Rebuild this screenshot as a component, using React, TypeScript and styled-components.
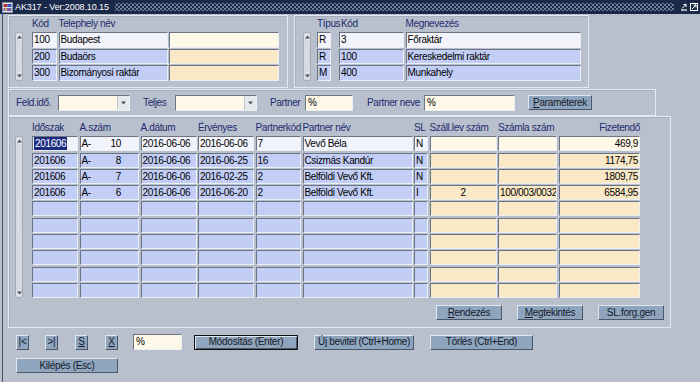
import React from 'react';
import styled, { createGlobalStyle } from 'styled-components';

const C = {
  bg: '#b7c0cc',
  title: '#1a2949',
  navy: '#1e2b6f',
  blue: '#c3cef7',
  blueCur: '#f3f4fb',
  cream: '#fae9c6',
  creamCur: '#fdf8e8',
  btn: '#8ea5bd',
};

const Global = createGlobalStyle`
  html, body { margin: 0; padding: 0; background: ${C.bg}; }
  body { font-family: "Liberation Sans", Arial, sans-serif; font-size: 10px; letter-spacing: -0.35px; }
  #root { width: 700px; height: 382px; overflow: hidden; }
`;

const Window = styled.div`
  width: 700px;
  height: 382px;
  display: flex;
  flex-direction: column;
  background: ${C.bg};
`;

const TitleBar = styled.div`
  height: 14px;
  flex: none;
  display: flex;
  align-items: center;
  background: ${C.title};
  color: #fff;
`;

const TitleText = styled.span`
  font-size: 9px;
  margin-left: 2px;
  padding-right: 6px;
  white-space: nowrap;
  letter-spacing: -0.1px;
`;

const Dots = styled.div`
  flex: 1;
  height: 8px;
  background-image: radial-gradient(circle, #6f7d98 0.8px, transparent 1px),
    radial-gradient(circle, #6f7d98 0.8px, transparent 1px);
  background-size: 4px 4px, 4px 4px;
  background-position: 0 0, 2px 2px;
`;

const TitleIcons = styled.div`
  display: flex;
  gap: 2px;
  margin: 0 2px 0 6px;
`;

const Body = styled.div`
  flex: 1;
  display: flex;
  margin-left: 2px;
  border-left: 1px solid #4c5464;
  padding-left: 5px;
`;

const Content = styled.div`
  display: flex;
  flex-direction: column;
  padding-top: 1px;
`;

const Panel = styled.div<{ $w: number; $h: number }>`
  box-sizing: border-box;
  width: ${(p) => p.$w}px;
  height: ${(p) => p.$h}px;
  border: 1px solid #e4e8ef;
  box-shadow: inset 1px 1px 0 #a5aebb;
`;

const TopRow = styled.div`
  display: flex;
  gap: 6px;
`;

const Spacer = styled.div<{ $h: number }>`
  height: ${(p) => p.$h}px;
  flex: none;
`;

const BlockInner = styled.div<{ $pl: number }>`
  display: flex;
  padding-left: ${(p) => p.$pl}px;
`;

const ScrollWrap = styled.div<{ $top: number }>`
  margin-top: ${(p) => p.$top}px;
`;

const Scroll = styled.div<{ $h: number }>`
  width: 8px;
  height: ${(p) => p.$h}px;
  box-sizing: border-box;
  display: flex;
  flex-direction: column;
  background: #ccd1d8;
  border-radius: 3px;
  border: 1px solid #a3aab6;
`;

const ScrollArrow = styled.div`
  height: 8px;
  flex: none;
  display: flex;
  align-items: center;
  justify-content: center;
  background: #dde0e5;
  border-radius: 2px;
`;

const ScrollTrack = styled.div`
  flex: 1;
  display: flex;
  align-items: center;
  justify-content: center;
  background: #d6dae0;
`;

const Grip = styled.div<{ $h: number }>`
  width: 4px;
  height: ${(p) => p.$h}px;
  background-image: radial-gradient(circle, #f4f5f7 0.7px, transparent 1px);
  background-size: 3px 3px;
`;

const FieldGrid = styled.div<{ $cols: string; $ml: number; $rows: string; $rg: number }>`
  display: grid;
  grid-template-columns: ${(p) => p.$cols};
  grid-template-rows: ${(p) => p.$rows};
  column-gap: 1.5px;
  row-gap: ${(p) => p.$rg}px;
  margin-left: ${(p) => p.$ml}px;
`;

const HeadLabel = styled.div<{ $right?: boolean; $pl?: number }>`
  align-self: end;
  color: ${C.navy};
  font-size: 10px;
  line-height: 12px;
  padding-bottom: 1px;
  padding-left: ${(p) => p.$pl || 0}px;
  white-space: nowrap;
  text-align: ${(p) => (p.$right ? 'right' : 'left')};
  overflow: visible;
`;

type Tone = 'blue' | 'cream';

const Field = styled.div<{ $tone: Tone; $cur?: boolean; $align?: string; $w?: number }>`
  box-sizing: border-box;
  height: 100%;
  width: ${(p) => (p.$w ? `${p.$w}px` : '100%')};
  border: 1px solid;
  border-color: #6c7383 #eceff4 #eceff4 #6c7383;
  background: ${(p) =>
    p.$tone === 'blue' ? (p.$cur ? C.blueCur : C.blue) : p.$cur ? C.creamCur : C.cream};
  padding: 0 1px;
  font-size: 10px;
  line-height: 13px;
  color: #000;
  white-space: nowrap;
  overflow: hidden;
  display: flex;
  align-items: center;
  justify-content: ${(p) =>
    p.$align === 'right' ? 'flex-end' : p.$align === 'center' ? 'center' : 'flex-start'};
`;

const Sel = styled.span`
  background: #1b2c80;
  color: #fff;
  padding: 0 1px;
`;

const NumSplit = styled.span`
  display: flex;
  justify-content: space-between;
  width: 100%;
  padding-right: 16px;
`;

const FilterRow = styled.div`
  display: flex;
  align-items: center;
  height: 100%;
  padding-left: 7px;
`;

const FLabel = styled.span<{ $w: number; $ml?: number }>`
  width: ${(p) => p.$w}px;
  margin-left: ${(p) => p.$ml || 0}px;
  color: ${C.navy};
  font-size: 10px;
  white-space: nowrap;
  flex: none;
`;

const Combo = styled.div<{ $w: number }>`
  width: ${(p) => p.$w}px;
  height: 16px;
  box-sizing: border-box;
  display: flex;
  border: 1px solid;
  border-color: #6c7383 #eceff4 #eceff4 #6c7383;
  background: ${C.creamCur};
  flex: none;
`;

const ComboBtn = styled.div`
  margin-left: auto;
  width: 11px;
  height: 100%;
  display: flex;
  align-items: center;
  justify-content: center;
  background: #e7e9ed;
  border-left: 1px solid #c3c7ce;
`;

const Input = styled.div<{ $w: number; $ml?: number }>`
  width: ${(p) => p.$w}px;
  height: 16px;
  margin-left: ${(p) => p.$ml || 0}px;
  box-sizing: border-box;
  border: 1px solid;
  border-color: #6c7383 #eceff4 #eceff4 #6c7383;
  background: ${C.creamCur};
  font-size: 10px;
  line-height: 14px;
  padding-left: 2px;
  flex: none;
`;

const Button = styled.button<{ $w: number; $ml?: number; $def?: boolean }>`
  width: ${(p) => p.$w}px;
  height: 15px;
  margin-left: ${(p) => p.$ml || 0}px;
  flex: none;
  box-sizing: border-box;
  padding: 0;
  background: ${C.btn};
  border: 1px solid;
  border-color: ${(p) => (p.$def ? '#111 #111 #111 #111' : '#e0e7ef #4b5666 #4b5666 #e0e7ef')};
  box-shadow: ${(p) => (p.$def ? 'inset 1px 1px 0 #e0e7ef, inset -1px -1px 0 #4b5666' : 'none')};
  font-family: "Liberation Sans", Arial, sans-serif;
  font-size: 10px;
  letter-spacing: -0.3px;
  line-height: 12px;
  color: #15182a;
  white-space: nowrap;
  cursor: default;
`;

const GridInner = styled.div`
  display: flex;
  flex-direction: column;
  height: 100%;
  box-sizing: border-box;
`;

const GridBody = styled.div`
  display: flex;
  padding-left: 6px;
`;

const GridButtons = styled.div`
  display: flex;
  justify-content: flex-end;
  gap: 15px;
  margin-top: 7px;
  padding-right: 6px;
`;

const Toolbar = styled.div`
  display: flex;
  align-items: center;
  margin-top: 6px;
  padding-left: 8px;
  height: 16px;
`;

const ExitRow = styled.div`
  margin-top: 8px;
  padding-left: 8px;
  display: flex;
`;

const Up = () => (
  <svg width="5" height="4" viewBox="0 0 5 4">
    <path d="M0 3.5 L2.5 0.5 L5 3.5 Z" fill="#4a5060" />
  </svg>
);
const Down = () => (
  <svg width="5" height="4" viewBox="0 0 5 4">
    <path d="M0 0.5 L2.5 3.5 L5 0.5 Z" fill="#4a5060" />
  </svg>
);

const VScrollBar: React.FC<{ h: number; grip: number }> = ({ h, grip }) => (
  <Scroll $h={h}>
    <ScrollArrow>
      <Up />
    </ScrollArrow>
    <ScrollTrack>
      <Grip $h={grip} />
    </ScrollTrack>
    <ScrollArrow>
      <Down />
    </ScrollArrow>
  </Scroll>
);

const AppIcon = () => (
  <svg width="11" height="11" viewBox="0 0 11 11" style={{ marginLeft: 2 }}>
    <rect x="0.5" y="0.5" width="10" height="10" fill="#dfe4ee" stroke="#8a93a8" />
    <rect x="1.5" y="2" width="4" height="3" fill="#c0302a" />
    <rect x="5.5" y="2" width="4" height="3" fill="#2f58c0" />
    <rect x="1.5" y="6" width="8" height="3" fill="#7c5aa8" />
    <rect x="3" y="6.5" width="2" height="2" fill="#e8d040" />
  </svg>
);

const WinIcons = () => (
  <TitleIcons>
    <svg width="8" height="8" viewBox="0 0 8 8">
      <path d="M1 7 H7" stroke="#fff" strokeWidth="1.2" />
      <path d="M2 5.5 L6 1.5 M3.5 1.5 H6 V4" stroke="#fff" strokeWidth="1" fill="none" />
    </svg>
    <svg width="8" height="8" viewBox="0 0 8 8">
      <rect x="0.5" y="0.5" width="7" height="7" fill="none" stroke="#fff" />
      <path d="M2 6 L6 2 M3.5 2 H6 V4.5" stroke="#fff" strokeWidth="1" fill="none" />
    </svg>
  </TitleIcons>
);

const telephely = [
  ['100', 'Budapest'],
  ['200', 'Budaörs'],
  ['300', 'Bizományosi raktár'],
];

const raktar = [
  ['R', '3', 'Főraktár'],
  ['R', '100', 'Kereskedelmi raktár'],
  ['M', '400', 'Munkahely'],
];

type Row = {
  ido: string;
  num: string;
  datum: string;
  erv: string;
  pkod: string;
  pnev: string;
  sl: string;
  szall: string;
  szamla: string;
  fiz: string;
};

const rows: Row[] = [
  { ido: '201606', num: '10', datum: '2016-06-06', erv: '2016-06-06', pkod: '7', pnev: 'Vevő Béla', sl: 'N', szall: '', szamla: '', fiz: '469,9' },
  { ido: '201606', num: '8', datum: '2016-06-06', erv: '2016-06-25', pkod: '16', pnev: 'Csizmás Kandúr', sl: 'N', szall: '', szamla: '', fiz: '1174,75' },
  { ido: '201606', num: '7', datum: '2016-06-06', erv: '2016-02-25', pkod: '2', pnev: 'Belföldi Vevő Kft.', sl: 'N', szall: '', szamla: '', fiz: '1809,75' },
  { ido: '201606', num: '6', datum: '2016-06-06', erv: '2016-06-20', pkod: '2', pnev: 'Belföldi Vevő Kft.', sl: 'I', szall: '2', szamla: '100/003/0032', fiz: '6584,95' },
];

const emptyRows = 6;

const headers: { t: string; right?: boolean }[] = [
  { t: 'Időszak' },
  { t: 'A.szám' },
  { t: 'A.dátum' },
  { t: 'Érvényes' },
  { t: 'Partnerkód' },
  { t: 'Partner név' },
  { t: 'SL' },
  { t: 'Száll.lev szám' },
  { t: 'Számla szám' },
  { t: 'Fizetendő', right: true },
];

const tones: Tone[] = ['blue', 'blue', 'blue', 'blue', 'blue', 'blue', 'blue', 'cream', 'cream', 'cream'];

export default function App() {
  return (
    <>
      <Global />
      <Window>
        <TitleBar>
          <AppIcon />
          <TitleText>AK317 - Ver:2008.10.15</TitleText>
          <Dots />
          <WinIcons />
        </TitleBar>
        <Body>
          <Content>
            <TopRow>
              <Panel $w={280} $h={73}>
                <BlockInner $pl={6}>
                  <ScrollWrap $top={16}>
                    <VScrollBar h={49} grip={12} />
                  </ScrollWrap>
                  <FieldGrid $cols="25px 109px 110px" $ml={9} $rows="15px repeat(3, 15.5px)" $rg={1}>
                    <HeadLabel>Kód</HeadLabel>
                    <HeadLabel>Telephely név</HeadLabel>
                    <div />
                    {telephely.map((r, i) => (
                      <React.Fragment key={i}>
                        <Field $tone="blue" $cur={i === 0}>{r[0]}</Field>
                        <Field $tone="blue" $cur={i === 0}>{r[1]}</Field>
                        <Field $tone="cream" $cur={i === 0} />
                      </React.Fragment>
                    ))}
                  </FieldGrid>
                </BlockInner>
              </Panel>
              <Panel $w={295} $h={73}>
                <BlockInner $pl={8}>
                  <ScrollWrap $top={16}>
                    <VScrollBar h={49} grip={12} />
                  </ScrollWrap>
                  <FieldGrid $cols="20.5px 65px 175px" $ml={6} $rows="15px repeat(3, 15.5px)" $rg={1}>
                    <HeadLabel>Típus</HeadLabel>
                    <HeadLabel $pl={2}>Kód</HeadLabel>
                    <HeadLabel>Megnevezés</HeadLabel>
                    {raktar.map((r, i) => (
                      <React.Fragment key={i}>
                        <Field $tone="blue" $cur={i === 0} $w={14}>{r[0]}</Field>
                        <Field $tone="blue" $cur={i === 0}>{r[1]}</Field>
                        <Field $tone="blue" $cur={i === 0}>{r[2]}</Field>
                      </React.Fragment>
                    ))}
                  </FieldGrid>
                </BlockInner>
              </Panel>
            </TopRow>

            <Spacer $h={1} />
            <Panel $w={648} $h={27}>
              <FilterRow>
                <FLabel $w={42}>Feld.idő.</FLabel>
                <Combo $w={72}>
                  <ComboBtn>
                    <Down />
                  </ComboBtn>
                </Combo>
                <FLabel $w={32} $ml={13}>Teljes</FLabel>
                <Combo $w={82}>
                  <ComboBtn>
                    <Down />
                  </ComboBtn>
                </Combo>
                <FLabel $w={35} $ml={13}>Partner</FLabel>
                <Input $w={48}>%</Input>
                <FLabel $w={57} $ml={14}>Partner neve</FLabel>
                <Input $w={91}>%</Input>
                <Button $w={64} $ml={13}>
                  <u>P</u>araméterek
                </Button>
              </FilterRow>
            </Panel>

            <Panel $w={663} $h={212}>
              <GridInner>
                <GridBody>
                  <ScrollWrap $top={19}>
                    <VScrollBar h={162} grip={36} />
                  </ScrollWrap>
                  <FieldGrid
                    $cols="46px 59.5px 56px 56px 45.5px 110px 14px 67px 59px 81.5px"
                    $ml={9}
                    $rows="18px repeat(10, 15px)"
                    $rg={1.3}
                  >
                    {headers.map((h, i) => (
                      <HeadLabel key={i} $right={h.right}>
                        {h.t}
                      </HeadLabel>
                    ))}
                    {rows.map((r, i) => {
                      const cur = i === 0;
                      return (
                        <React.Fragment key={i}>
                          <Field $tone="blue" $cur={cur}>{cur ? <Sel>{r.ido}</Sel> : r.ido}</Field>
                          <Field $tone="blue" $cur={cur}>
                            <NumSplit>
                              <span>A-</span>
                              <span>{r.num}</span>
                            </NumSplit>
                          </Field>
                          <Field $tone="blue" $cur={cur}>{r.datum}</Field>
                          <Field $tone="blue" $cur={cur}>{r.erv}</Field>
                          <Field $tone="blue" $cur={cur}>{r.pkod}</Field>
                          <Field $tone="blue" $cur={cur}>{r.pnev}</Field>
                          <Field $tone="blue" $cur={cur}>{r.sl}</Field>
                          <Field $tone="cream" $cur={cur} $align="center">{r.szall}</Field>
                          <Field $tone="cream" $cur={cur}>{r.szamla}</Field>
                          <Field $tone="cream" $cur={cur} $align="right">{r.fiz}</Field>
                        </React.Fragment>
                      );
                    })}
                    {Array.from({ length: emptyRows }).map((_, i) => (
                      <React.Fragment key={`e${i}`}>
                        {tones.map((t, j) => (
                          <Field key={j} $tone={t} />
                        ))}
                      </React.Fragment>
                    ))}
                  </FieldGrid>
                </GridBody>
                <GridButtons>
                  <Button $w={66}>
                    <u>R</u>endezés
                  </Button>
                  <Button $w={66}>
                    <u>M</u>egtekintés
                  </Button>
                  <Button $w={66}>SL.forg.gen</Button>
                </GridButtons>
              </GridInner>
            </Panel>

            <Toolbar>
              <Button $w={13}>|&lt;</Button>
              <Button $w={13} $ml={16}>&gt;|</Button>
              <Button $w={13} $ml={17}>
                <u>S</u>
              </Button>
              <Button $w={13} $ml={17}>
                <u>X</u>
              </Button>
              <Input $w={49} $ml={15}>%</Input>
              <Button $w={104} $ml={12} $def>
                Módosítás (Enter)
              </Button>
              <Button $w={100} $ml={16}>Új bevitel (Ctrl+Home)</Button>
              <Button $w={103} $ml={16}>Törlés (Ctrl+End)</Button>
            </Toolbar>
            <ExitRow>
              <Button $w={102}>Kilépés (Esc)</Button>
            </ExitRow>
          </Content>
        </Body>
      </Window>
    </>
  );
}
